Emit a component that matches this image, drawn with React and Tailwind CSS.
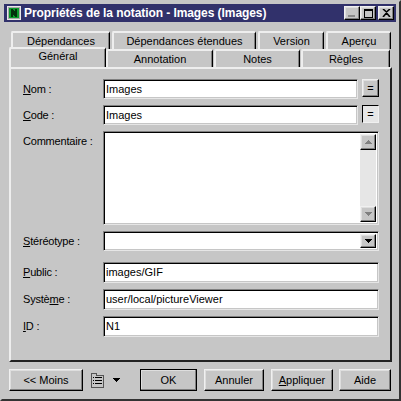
const RAISED = "bg-[#c6c6c6] border border-t-[#f0f0f0] border-l-[#f0f0f0] border-r-black border-b-black shadow-[inset_-1px_-1px_0_#808080,inset_1px_1px_0_#dedede]";
const SUNKEN = "bg-white border border-t-[#808080] border-l-[#808080] border-r-[#e6e6e6] border-b-[#e6e6e6] shadow-[inset_1px_1px_0_#000,inset_-1px_-1px_0_#c6c6c6]";

function Tab({ w, h = "h-[18px]", active, children, ml = "" }) {
  return (
    <div className={`${w} ${h} ${ml} shrink-0 flex justify-center ${active ? "items-start pt-[2px] z-10" : "items-center"} bg-[#c6c6c6] rounded-t-[2px] border-t-2 border-l-2 border-t-[#eeeeee] border-l-[#eeeeee] border-r border-r-black shadow-[inset_-1px_0_0_#808080]`}>
      {children}
    </div>
  );
}

function U({ children }) {
  return <span className="underline underline-offset-1">{children}</span>;
}

function Row({ label, mt, field, after }) {
  return (
    <div className={`flex items-start ${mt}`}>
      <div className="w-[80px] pt-[3px] text-[11px] leading-[14px] text-black tracking-[-0.2px] whitespace-nowrap">{label}</div>
      {field}
      {after}
    </div>
  );
}

function Input({ w = "w-[274px]", h = "h-[20px]", v }) {
  return <div className={`${w} ${h} ${SUNKEN} pl-[2px] text-[11px] leading-[18px] text-black`}>{v}</div>;
}

function EqBtn({ focus }) {
  return (
    <div className={`ml-[4px] w-[17px] h-[18px] ${focus ? "bg-[#e6e6e6] border border-t-black border-l-black border-r-[#f0f0f0] border-b-[#f0f0f0]" : RAISED} flex items-center justify-center text-[11px] leading-none text-black`}>=</div>
  );
}

function Btn({ w, children, def, ml }) {
  return (
    <div className={`${w} ${ml} h-[22px] flex items-center justify-center text-[11px] text-black ${RAISED} ${def ? "outline outline-1 outline-black -outline-offset-1" : ""}`}>
      {children}
    </div>
  );
}

function Tri({ down = true, color = "#000" }) {
  return (
    <svg width="7" height="4" viewBox="0 0 7 4" shapeRendering="crispEdges">
      <path d={down ? "M0 0h7v1h-1v1h-1v1h-1v1h-1v-1h-1v-1h-1v-1h-1z" : "M3 0h1v1h1v1h1v1h1v1h-7v-1h1v-1h1v-1h1z"} fill={color} />
    </svg>
  );
}

export default function App() {
  return (
    <div className="w-[401px] h-[401px] bg-[#c6c6c6] border-[2px] border-t-[#c6c6c6] border-l-[#c6c6c6] border-r-[#333] border-b-[#333] p-[2px] font-['Liberation_Sans',Arial,sans-serif] overflow-hidden select-none">
      <div className="h-[18px] w-[392px] bg-[#31316b] flex items-center pl-[3px]">
        <svg width="14" height="14" viewBox="0 0 14 14" shapeRendering="crispEdges">
          <rect width="14" height="14" fill="#e8e8e8" />
          <rect x="1" y="1" width="12" height="12" fill="#a8a8a8" />
          <rect x="2" y="2" width="10" height="10" fill="#0a9a2a" />
          <path d="M4 3h2v1h1v1h1v-2h2v8h-2v-1h-1v-1h-1v2h-2z" fill="#03300c" />
        </svg>
        <span className="ml-[3px] text-white font-bold text-[12px] leading-[18px] whitespace-nowrap tracking-[-0.07px]">Propriétés de la notation - Images (Images)</span>
        <div className="ml-auto mr-[2px] flex">
          <div className={`w-[16px] h-[14px] ${RAISED} flex items-end pl-[3px] pb-[2px]`}><div className="w-[7px] h-[2px] bg-[#8a8a8a]" /></div>
          <div className={`w-[16px] h-[14px] ${RAISED} flex items-center justify-center`}><div className="w-[9px] h-[9px] border border-t-2 border-black" /></div>
          <div className={`ml-[2px] w-[16px] h-[14px] ${RAISED} flex items-center justify-center`}>
            <svg width="9" height="8" viewBox="0 0 9 8"><path d="M1 0l3.5 3L8 0M1 8l3.5-4L8 8" stroke="#000" strokeWidth="1.6" fill="none" /></svg>
          </div>
        </div>
      </div>

      <div className="mt-[9px] ml-[7px] flex text-[11px] text-black leading-none">
        <Tab w="w-[99px]">Dépendances</Tab>
        <Tab w="w-[144px]" ml="ml-[2px]">Dépendances étendues</Tab>
        <Tab w="w-[66px]" ml="ml-[2px]">Version</Tab>
        <Tab w="w-[65px]" ml="ml-[2px]">Aperçu</Tab>
      </div>
      <div className="ml-[5px] flex items-end text-[11px] text-black leading-none -mt-[1px] relative z-10 h-[19px]">
        <Tab w="w-[97px]" h="h-[20px]" active>Général</Tab>
        <Tab w="w-[107px]">Annotation</Tab>
        <Tab w="w-[86px]" ml="ml-[1px]">Notes</Tab>
        <Tab w="w-[89px]" ml="ml-[1px]">Règles</Tab>
      </div>

      <div className="ml-[5px] w-[383px] h-[295px] border-t-2 border-l-2 border-t-[#eeeeee] border-l-[#eeeeee] border-r-2 border-b-2 border-r-[#222] border-b-[#222] pl-[12px] pt-[10px]">
        <Row label={<><U>N</U>om :</>} field={<Input w="w-[255px]" v="Images" />} after={<EqBtn />} />
        <Row mt="mt-[6px]" label={<><U>C</U>ode :</>} field={<Input w="w-[255px]" v="Images" />} after={<EqBtn focus />} />
        <Row mt="mt-[6px]" label="Commentaire :" field={
          <div className={`w-[276px] h-[94px] ${SUNKEN} flex justify-end p-[2px]`}>
            <div className="w-[16px] h-full bg-[#e6e6e6] flex flex-col justify-between">
              <div className={`h-[16px] ${RAISED} flex items-center justify-center`}><Tri down={false} color="#808080" /></div>
              <div className={`h-[16px] ${RAISED} flex items-center justify-center`}><Tri color="#808080" /></div>
            </div>
          </div>
        } />
        <Row mt="mt-[6px]" label={<><U>S</U>téréotype :</>} field={
          <div className={`w-[276px] h-[20px] ${SUNKEN} flex justify-end p-[2px]`}>
            <div className={`w-[16px] h-full ${RAISED} flex items-center justify-center`}><Tri /></div>
          </div>
        } />
        <Row mt="mt-[11px]" label={<><U>P</U>ublic :</>} field={<Input w="w-[276px]" h="h-[21px]" v="images/GIF" />} />
        <Row mt="mt-[6px]" label={<>Systè<U>m</U>e :</>} field={<Input w="w-[276px]" h="h-[21px]" v="user/local/pictureViewer" />} />
        <Row mt="mt-[6px]" label={<><U>I</U>D :</>} field={<Input w="w-[276px]" h="h-[21px]" v="N1" />} />
      </div>

      <div className="mt-[7px] ml-[5px] flex items-center">
        <Btn w="w-[74px]">&lt;&lt; Moins</Btn>
        <svg className="ml-[7px]" width="14" height="16" viewBox="0 0 14 16" shapeRendering="crispEdges">
          <path d="M1 1h5v2h7v12H1z" fill="#c6c6c6" stroke="#555" />
          <path d="M3 5h1v1H3zM3 8h1v1H3zM3 11h1v1H3zM5 5h7v1H5zM5 8h7v1H5zM5 11h7v1H5z" fill="#000" />
        </svg>
        <div className="ml-[9px] flex"><Tri /></div>
        <Btn w="w-[57px]" ml="ml-[20px]" def>OK</Btn>
        <Btn w="w-[60px]" ml="ml-[7px]">Annuler</Btn>
        <Btn w="w-[62px]" ml="ml-[7px]"><span><U>A</U>ppliquer</span></Btn>
        <Btn w="w-[52px]" ml="ml-[6px]">Aide</Btn>
      </div>
    </div>
  );
}
